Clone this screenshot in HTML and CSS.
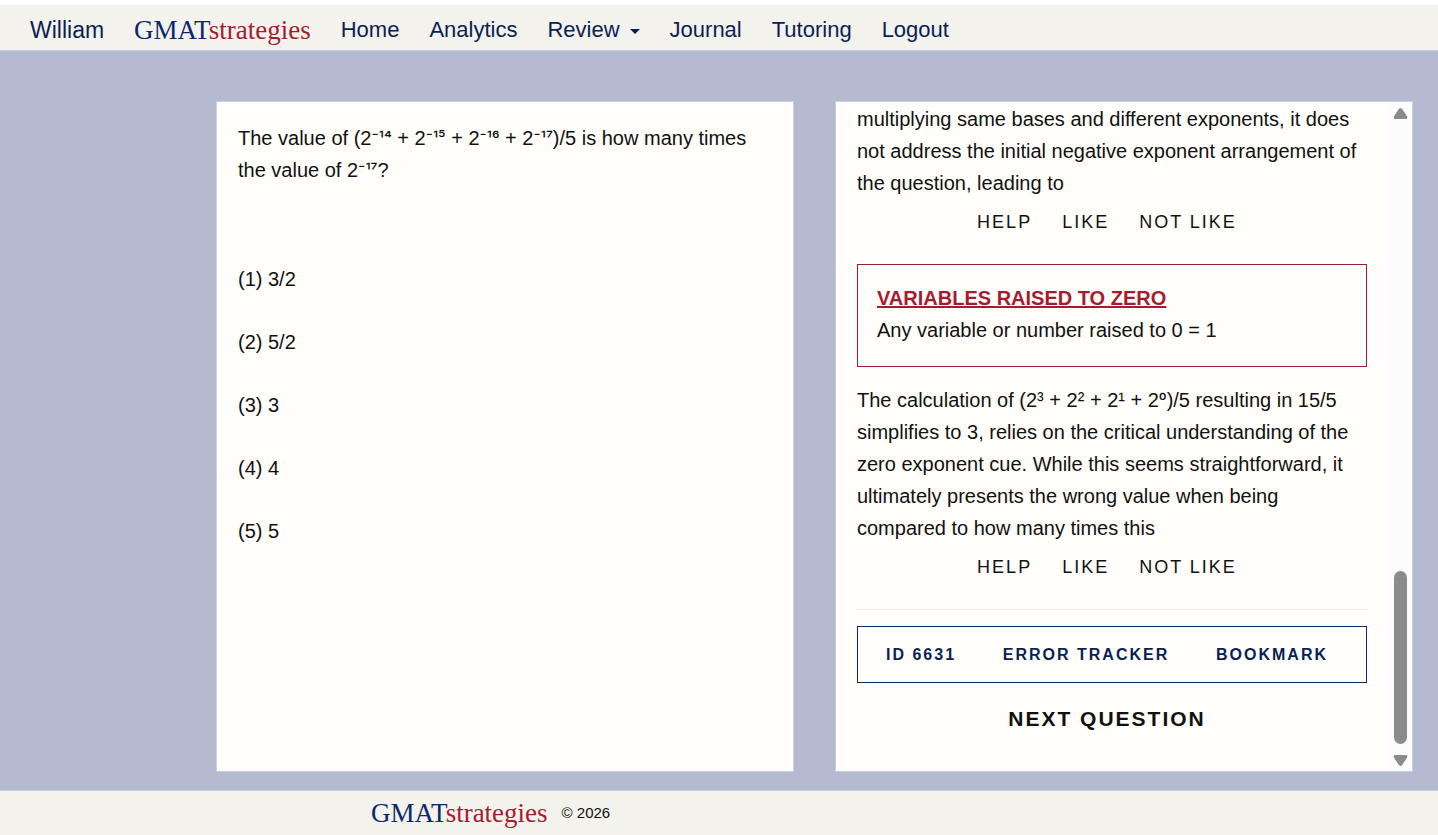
FILE: index.html
```html
<!DOCTYPE html>
<html lang="en">
<head>
<meta charset="utf-8">
<title>GMATstrategies</title>
<link rel="stylesheet" href="styles.css">
</head>
<body>
<header class="topbar">
  <nav class="nav">
    <a class="nav-link user" href="#">William</a>
    <a class="brand" href="#">GMAT<span class="brand-accent">strategies</span></a>
    <a class="nav-link" href="#">Home</a>
    <a class="nav-link" href="#">Analytics</a>
    <button class="nav-link nav-menu" type="button">Review<span class="caret"></span></button>
    <a class="nav-link" href="#">Journal</a>
    <a class="nav-link" href="#">Tutoring</a>
    <a class="nav-link" href="#">Logout</a>
  </nav>
</header>
<main class="workspace">
  <section class="panel question">
    <p class="text">The value of (2<span class="exp">⁻¹⁴</span> + 2<span class="exp">⁻¹⁵</span> + 2<span class="exp">⁻¹⁶</span> + 2<span class="exp">⁻¹⁷</span>)/5 is how many times the value of 2<span class="exp">⁻¹⁷</span>?</p>
    <ul class="options">
      <li>(1) 3/2</li>
      <li>(2) 5/2</li>
      <li>(3) 3</li>
      <li>(4) 4</li>
      <li>(5) 5</li>
    </ul>
  </section>
  <section class="panel review">
    <div class="review-body">
      <p class="text">multiplying same bases and different exponents, it does not address the initial negative exponent arrangement of the question, leading to</p>
      <div class="feedback">
        <button type="button">HELP</button>
        <button type="button">LIKE</button>
        <button type="button">NOT LIKE</button>
      </div>
      <div class="cue">
        <a class="cue-title" href="#">VARIABLES RAISED TO ZERO</a>
        <p class="text">Any variable or number raised to 0 = 1</p>
      </div>
      <p class="text">The calculation of (2³ + 2² + 2¹ + 2<span class="exp">⁰</span>)/5 resulting in 15/5 simplifies to 3, relies on the critical understanding of the zero exponent cue. While this seems straightforward, it ultimately presents the wrong value when being compared to how many times this</p>
      <div class="feedback">
        <button type="button">HELP</button>
        <button type="button">LIKE</button>
        <button type="button">NOT LIKE</button>
      </div>
      <hr class="rule">
      <div class="tools">
        <button type="button">ID 6631</button>
        <button type="button">ERROR TRACKER</button>
        <button type="button">BOOKMARK</button>
      </div>
      <button class="next" type="button">NEXT QUESTION</button>
    </div>
    <div class="scrollbar" aria-hidden="true">
      <svg width="15" height="11" viewBox="0 0 15 11"><path d="M6 .8Q7.500-.6 9 .8L14 8.300Q15 11 13 11H2Q0 11 1 8.300Z"/></svg>
      <div class="track"><div class="thumb"></div></div>
      <svg width="15" height="11" viewBox="0 0 15 11"><path d="M6 10.200Q7.500 11.600 9 10.200L14 2.700Q15 0 13 0H2Q0 0 1 2.700Z"/></svg>
    </div>
  </section>
</main>
<footer class="footer">
  <a class="brand" href="#">GMAT<span class="brand-accent">strategies</span></a>
  <span>© 2026</span>
</footer>
</body>
</html>
```
FILE: styles.css
```css
* { box-sizing: border-box; }
body {
  margin: 0;
  padding-top: 5px;
  min-height: 100vh;
  display: flex;
  flex-direction: column;
  background: #fff;
  color: #111;
  font-family: "Liberation Sans", Arial, sans-serif;
  font-size: 20px;
  line-height: 32px;
}
button {
  margin: 0;
  padding: 0;
  border: 0;
  background: none;
  color: inherit;
  font: inherit;
  letter-spacing: inherit;
  cursor: pointer;
}
a { color: inherit; text-decoration: none; }
p { margin: 0; }
.exp { font-family: Inter, sans-serif; font-size: 17px; line-height: 1; }

.topbar { background: #f4f2ed; border-bottom: 1px solid #c9cfe0; }
.nav {
  display: flex;
  align-items: center;
  gap: 30px;
  height: 45px;
  padding: 4px 30px 0;
}
.nav-link { color: #0a1f54; font-size: 22px; }
.user { font-size: 23px; }
.nav-menu { display: flex; align-items: center; gap: 10px; }
.caret {
  margin-top: 4px;
  border: 5px solid transparent;
  border-top-color: #0a1f54;
  border-bottom: 0;
}
.brand {
  color: #0b2a6b;
  font-family: Georgia, "Liberation Serif", serif;
  font-size: 27px;
}
.brand-accent { color: #a51c30; }

.workspace {
  flex: 1;
  display: grid;
  grid-template-columns: minmax(0, 1fr) minmax(0, 1fr);
  gap: 41px;
  padding: 50px 25px 18px 216px;
  background: #b4bbd1;
}
.panel { background: #fffefb; border: 1px solid #c9cfe0; }
.question { padding: 20px 21px; }
.options {
  display: flex;
  flex-direction: column;
  gap: 31px;
  margin: 77px 0 0;
  padding: 0;
  list-style: none;
}

.review { display: flex; }
.review-body {
  flex: 1;
  min-width: 0;
  display: flex;
  flex-direction: column;
  padding: 1px 21px 20px;
}
.feedback {
  display: flex;
  justify-content: center;
  gap: 30px;
  margin: 7px 10px 26px 0;
  font-size: 18px;
  letter-spacing: 2px;
}
.cue { margin-bottom: 17px; padding: 17px 19px 20px; border: 1px solid #a51c30; }
.cue-title { color: #a51c30; font-weight: bold; text-decoration: underline; }
.rule { width: 100%; height: 1px; margin: 0 0 16px; border: 0; background: #ebebeb; }
.tools {
  display: flex;
  justify-content: space-between;
  padding: 12px 38px 11px 28px;
  border: 1px solid #0b2a6b;
  color: #0a1f54;
  font-size: 16px;
  font-weight: bold;
  letter-spacing: 2px;
}
.next { margin: 20px 10px 0 0; font-size: 21px; font-weight: bold; letter-spacing: 2px; }

.scrollbar {
  flex: none;
  display: flex;
  flex-direction: column;
  align-items: center;
  gap: 6px;
  width: 24px;
  padding: 6px 0 5px;
  background: #fcfcfc;
  fill: #8b8b8b;
}
.track { flex: 1; display: flex; flex-direction: column; justify-content: flex-end; padding-bottom: 5px; }
.thumb { width: 13px; height: 28%; border-radius: 7px; background: #8b8b8b; }

.footer {
  display: flex;
  align-items: center;
  gap: 14px;
  height: 45px;
  padding-left: 371px;
  border-top: 1px solid #c9cfe0;
  background: #f4f2ed;
  font-size: 15px;
}
```
